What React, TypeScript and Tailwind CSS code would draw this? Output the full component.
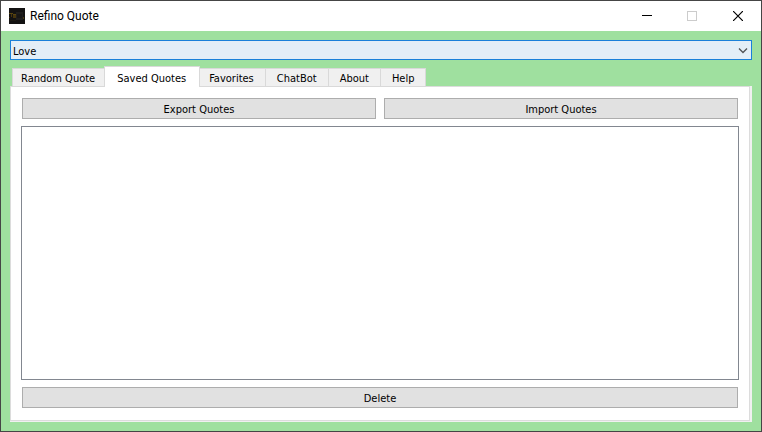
import { useState } from 'react';

const CATEGORIES = ['Love', 'Life', 'Success', 'Wisdom', 'Friendship'];

const TABS = ['Random Quote', 'Saved Quotes', 'Favorites', 'ChatBot', 'About', 'Help'];

function AppIcon() {
  return (
    <svg width="16" height="16" viewBox="0 0 16 16" shapeRendering="crispEdges" aria-hidden="true">
      <rect width="16" height="16" fill="#131212" />
      <rect x="7" y="4" width="7" height="8" fill="#1f1e1d" />
      <rect x="8" y="6" width="5" height="4" fill="#171616" />
      <path d="M0 5h4v1H0zM4 6h3v1H4z" fill="#5a4610" />
      <path d="M2 6h1v3H2zM4 7h1v3H4zM5 7h2v3H5zM0 9h1v1H0z" fill="#46350d" />
      <rect x="14" y="9" width="1" height="2" fill="#4a3a0e" />
      <path d="M1 12h6v1H1z" fill="#1d1a14" />
    </svg>
  );
}

function TitleBar() {
  return (
    <header className="flex h-[30px] shrink-0 items-center bg-white pl-2">
      <AppIcon />
      <h1 className="ml-[5px] flex-1 font-['Roboto','Noto_Sans',sans-serif] text-[12px] leading-4 text-black">
        Refino Quote
      </h1>
      <button type="button" aria-label="Minimize" className="flex h-full w-[45px] items-center justify-center">
        <svg width="10" height="10" viewBox="0 0 10 10" shapeRendering="crispEdges">
          <path d="M0 4h10v1H0z" fill="#000" />
        </svg>
      </button>
      <button type="button" aria-label="Maximize" disabled className="flex h-full w-[46px] items-center justify-center">
        <svg width="10" height="10" viewBox="0 0 10 10" shapeRendering="crispEdges">
          <rect x="0.5" y="0.5" width="9" height="9" fill="none" stroke="#ccc" />
        </svg>
      </button>
      <button type="button" aria-label="Close" className="flex h-full w-[46px] items-center justify-center">
        <svg width="10" height="10" viewBox="0 0 10 10">
          <path d="M0 0l10 10M10 0L0 10" stroke="#000" strokeWidth="1.2" />
        </svg>
      </button>
    </header>
  );
}

function PushButton({ children }: { children: string }) {
  return (
    <button
      type="button"
      className="h-[21px] flex-1 border border-[#adadad] bg-[#e1e1e1] pt-0.5 text-center leading-[17px] hover:border-[#0078d7] hover:bg-[#e5f1fb]"
    >
      {children}
    </button>
  );
}

export default function App() {
  const [category, setCategory] = useState('Love');
  const [tab, setTab] = useState('Saved Quotes');

  return (
    <div className="flex h-screen flex-col border border-[#454545] bg-[#9fe09f] font-['DejaVu_Sans_Condensed','Noto_Sans',sans-serif] text-[11px] text-black">
      <TitleBar />

      <main className="flex min-h-0 flex-1 flex-col p-[9px]">
        {/* Category */}
        <div className="relative">
          <select
            aria-label="Category"
            value={category}
            onChange={(e) => setCategory(e.target.value)}
            className="block h-5 w-full appearance-none border border-[#1a80d9] bg-[#e3eef7] pt-[3px] pl-0.5 leading-[15px] outline-none"
          >
            {CATEGORIES.map((c) => (
              <option key={c}>{c}</option>
            ))}
          </select>
          <svg
            className="pointer-events-none absolute top-[7px] right-1"
            width="10"
            height="7"
            viewBox="0 0 10 7"
            fill="none"
            aria-hidden="true"
          >
            <path d="M1 1.5l4 4 4-4" stroke="#505356" strokeWidth="1.3" />
          </svg>
        </div>

        {/* Tabs */}
        <div role="tablist" className="z-10 mt-1.5 -mb-px flex items-end pl-0.5">
          {TABS.map((name) => (
            <button
              key={name}
              type="button"
              role="tab"
              aria-selected={tab === name}
              onClick={() => setTab(name)}
              className={
                tab === name
                  ? 'z-10 -mr-0.5 -ml-[3px] h-[21px] border border-b-0 border-[#d9d9d9] bg-white pt-0.5 pr-[13px] pl-3 leading-[17px]'
                  : 'h-[19px] border border-l-0 border-[#d9d9d9] bg-[#f0f0f0] px-[11px] pt-0.5 leading-4 first:border-l first:pl-2'
              }
            >
              {name}
            </button>
          ))}
        </div>

        {/* Page of the selected tab */}
        <div role="tabpanel" aria-label={tab} className="flex min-h-0 flex-1 bg-[#f0f0f0] pr-0.5 pb-px">
          <div className="flex min-h-0 flex-1 flex-col border border-[#dcdcdc] bg-white px-2.5 pt-[11px] pb-3">
            <div className="flex gap-2 px-px">
              <PushButton>Export Quotes</PushButton>
              <PushButton>Import Quotes</PushButton>
            </div>
            <ul aria-label="Saved quotes" className="my-[7px] min-h-0 flex-1 overflow-auto border border-[#828790] bg-white" />
            <div className="flex px-px">
              <PushButton>Delete</PushButton>
            </div>
          </div>
        </div>
      </main>
    </div>
  );
}
